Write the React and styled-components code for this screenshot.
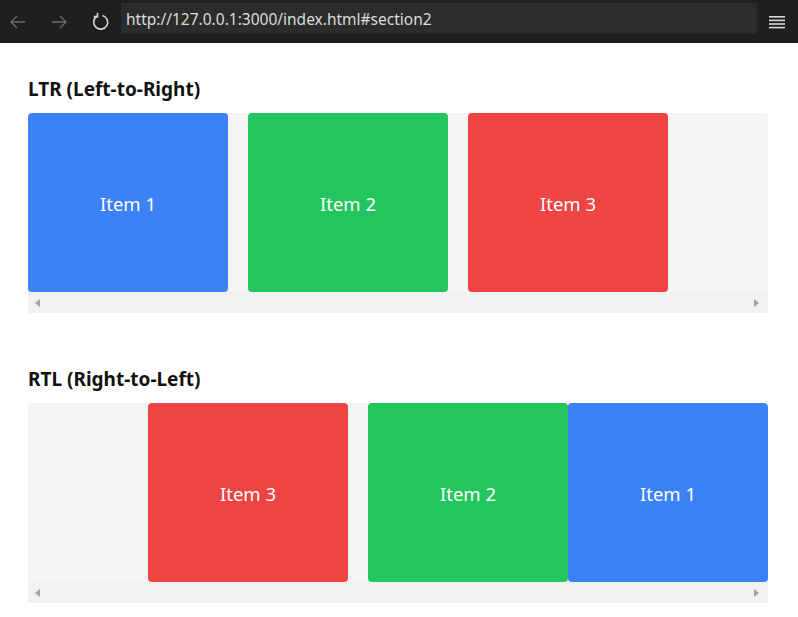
import React from 'react'
import styled, { createGlobalStyle } from 'styled-components'

const GlobalStyle = createGlobalStyle`
  html, body {
    margin: 0;
    padding: 0;
    background: #ffffff;
    font-family: "Noto Sans", "Open Sans", "Liberation Sans", sans-serif;
  }
`

const BrowserBar = styled.div`
  height: 43px;
  background: #1f1f1f;
  display: flex;
  align-items: center;
  gap: 5px;
  padding: 0 9px 0 0;
  box-sizing: border-box;
`

const NavButton = styled.div`
  width: 36px;
  height: 32px;
  display: flex;
  align-items: center;
  justify-content: center;
  color: ${(p) => (p.dim ? '#6b6b6b' : '#d4d4d4')};
`

const Address = styled.div`
  flex: 1;
  height: 31px;
  align-self: flex-end;
  margin: 0 3px 9px -2px;
  background: #2c2c2c;
  color: #dcdcdc;
  font-size: 15.5px;
  display: flex;
  align-items: center;
  padding-left: 5px;
`

const Menu = styled.div`
  width: 24px;
  display: flex;
  justify-content: center;
`

const Main = styled.main`
  padding: 34px 30px 0 28px;
`

const Section = styled.section`
  & + & {
    margin-top: 54px;
  }
`

const Heading = styled.h2`
  margin: 0 0 12px;
  font-size: 19px;
  line-height: 24px;
  font-weight: 700;
  color: #111;
`

const Scroller = styled.div`
  background: #f3f4f6;
  border-radius: 4px 4px 0 0;
  overflow: hidden;
`

const Row = styled.div`
  display: flex;
  direction: ${(p) => p.dir};
  height: 179px;

  & > * + * {
    margin-left: 20px;
  }
`

const Item = styled.div`
  flex: 0 0 200px;
  height: 100%;
  border-radius: 4px;
  background: ${(p) => p.color};
  color: #fff;
  font-size: 18.5px;
  display: flex;
  align-items: center;
  justify-content: center;
  padding-top: 1px;
  box-sizing: border-box;
`

const Track = styled.div`
  height: 21px;
  background: #f1f1f1;
  display: flex;
  align-items: center;
  justify-content: space-between;
  padding: 0 9px 0 7px;
`

const Arrow = styled.span`
  width: 0;
  height: 0;
  border-top: 4px solid transparent;
  border-bottom: 4px solid transparent;
  ${(p) => (p.left ? 'border-right: 5px solid #a3a3a3;' : 'border-left: 5px solid #a3a3a3;')}
`

const colors = { 1: '#3b82f6', 2: '#22c55e', 3: '#ef4444' }

const Carousel = ({ title, dir }) => (
  <Section>
    <Heading>{title}</Heading>
    <Scroller>
      <Row dir={dir}>
        {[1, 2, 3].map((n) => (
          <Item key={n} color={colors[n]}>Item {n}</Item>
        ))}
      </Row>
    </Scroller>
    <Track>
      <Arrow left />
      <Arrow />
    </Track>
  </Section>
)

const App = () => (
  <>
    <GlobalStyle />
    <BrowserBar>
      <NavButton dim>
        <svg width="18" height="18" viewBox="0 0 18 18" fill="none" stroke="currentColor" strokeWidth="1.4">
          <path d="M16 9H2M8 3L2 9l6 6" />
        </svg>
      </NavButton>
      <NavButton dim>
        <svg width="18" height="18" viewBox="0 0 18 18" fill="none" stroke="currentColor" strokeWidth="1.4">
          <path d="M2 9h14M10 3l6 6-6 6" />
        </svg>
      </NavButton>
      <NavButton>
        <svg width="20" height="20" viewBox="0 0 20 20" fill="none" stroke="currentColor" strokeWidth="1.6">
          <path d="M7 4.2A7 7 0 1 0 12.5 3.4" />
          <path d="M7.5 0.8V4.6H3.7" />
        </svg>
      </NavButton>
      <Address>http://127.0.0.1:3000/index.html#section2</Address>
      <Menu>
        <svg width="16" height="14" viewBox="0 0 16 14" fill="#d8d8d8">
          <rect x="0" y="1" width="16" height="1.6" />
          <rect x="0" y="4.6" width="16" height="1.6" />
          <rect x="0" y="8.2" width="16" height="1.6" />
          <rect x="0" y="11.8" width="16" height="1.6" />
        </svg>
      </Menu>
    </BrowserBar>
    <Main>
      <Carousel title="LTR (Left-to-Right)" dir="ltr" />
      <Carousel title="RTL (Right-to-Left)" dir="rtl" />
    </Main>
  </>
)

export default App
